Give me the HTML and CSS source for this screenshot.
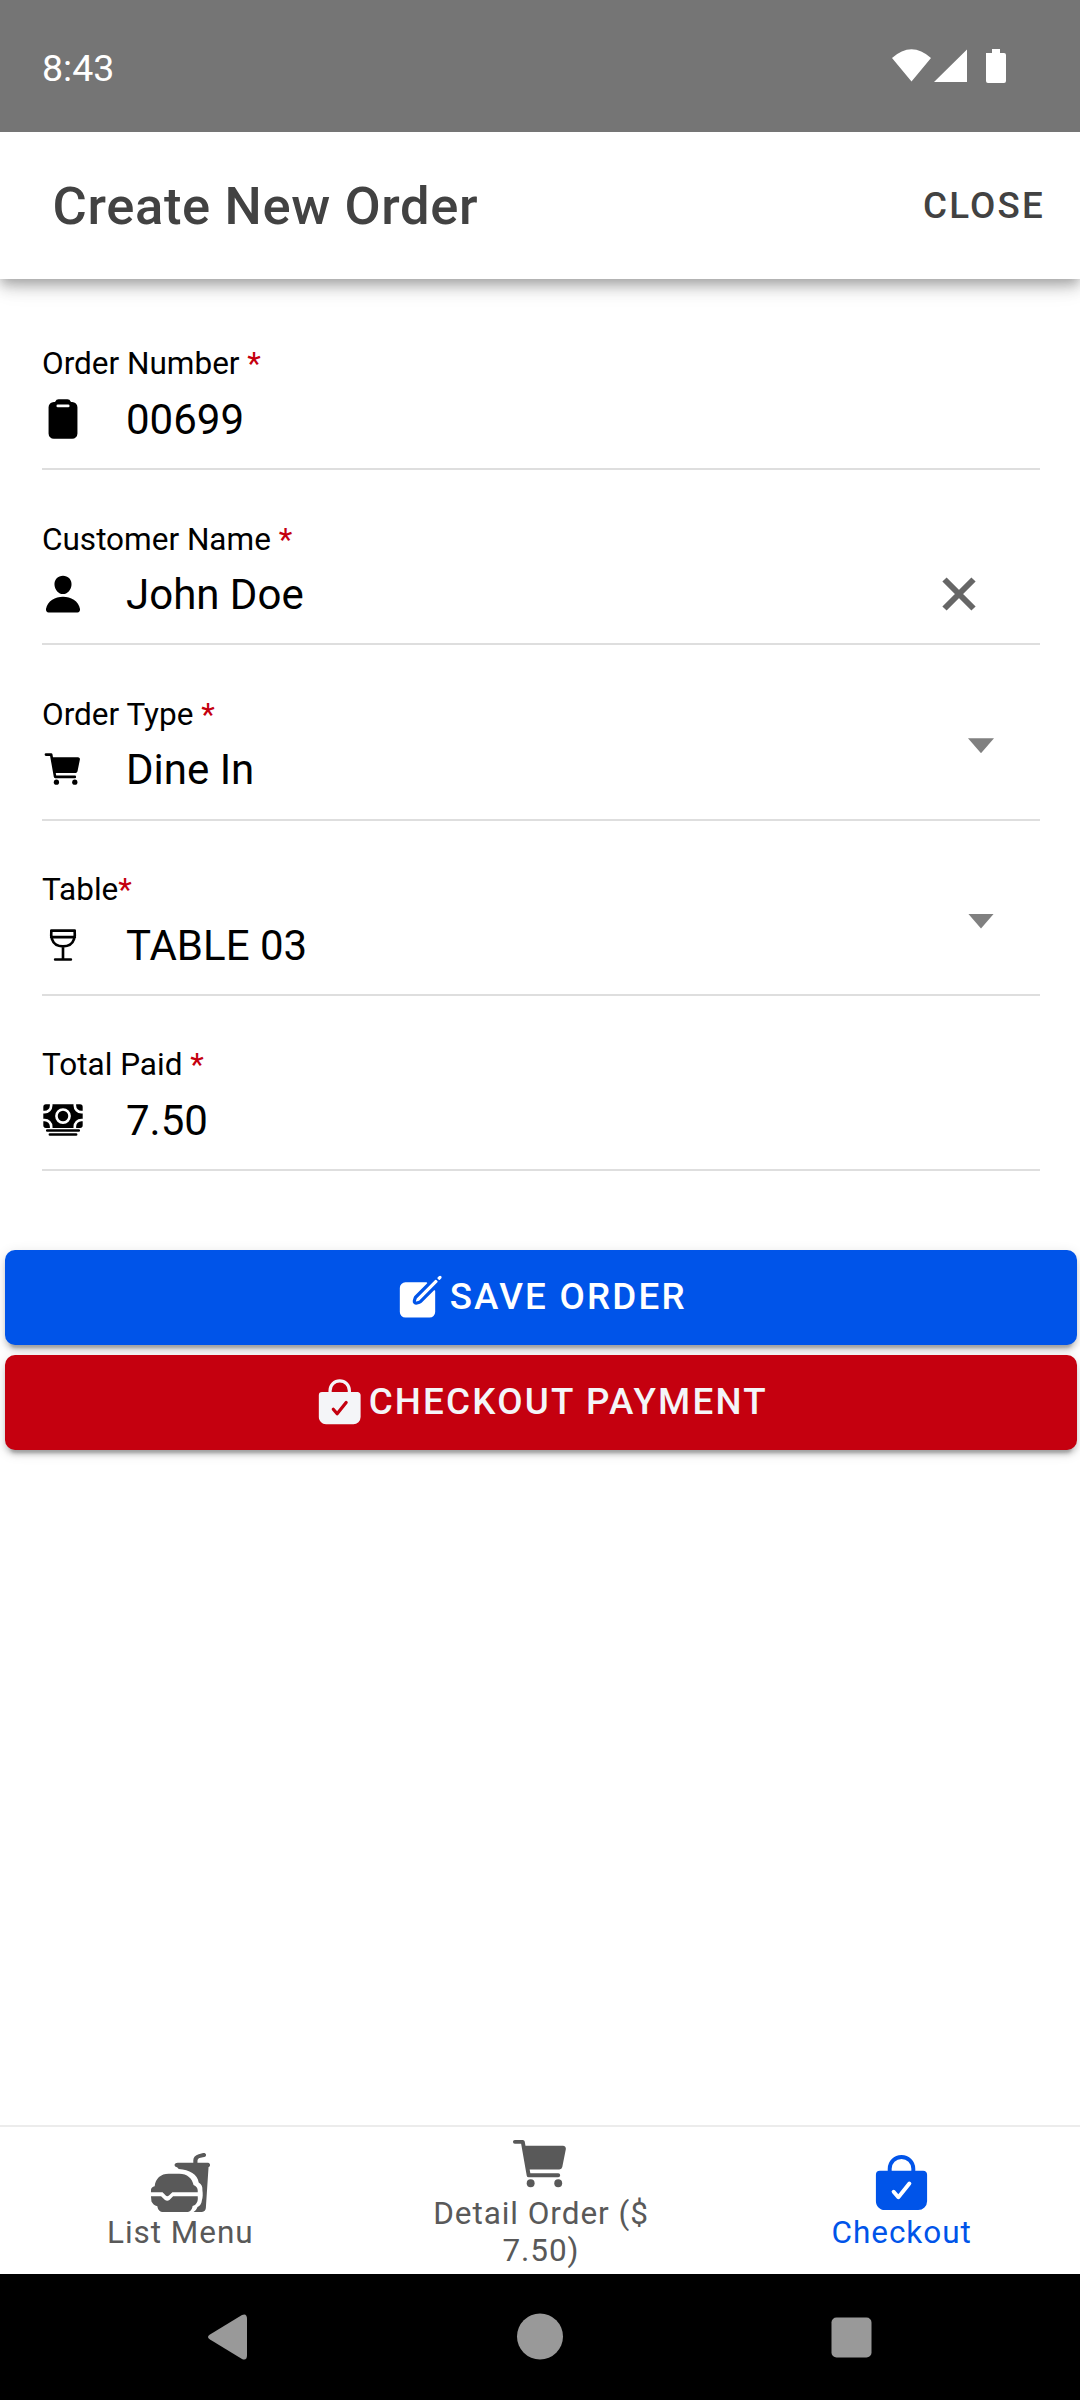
FILE: index.html
```html
<!DOCTYPE html>
<html lang="en">
<head>
<meta charset="utf-8">
<title>Create New Order</title>
<link rel="stylesheet" href="styles.css">
</head>
<body>
<svg class="sprite" width="0" height="0" aria-hidden="true">
  <symbol id="clipboard" viewBox="0 0 512 512"><path d="M368 48h-11.41a8 8 0 01-7.44-5.08A42.18 42.18 0 00309.87 16H202.13a42.18 42.18 0 00-39.28 26.92A8 8 0 01155.41 48H144a64 64 0 00-64 64v320a64 64 0 0064 64h224a64 64 0 0064-64V112a64 64 0 00-64-64zm-48.13 64H192.13a16 16 0 010-32h127.74a16 16 0 010 32z"/></symbol>
  <symbol id="person" viewBox="0 0 512 512"><path d="M332.64 64.58C313.18 43.57 286 32 256 32c-30.16 0-57.43 11.5-76.8 32.38-19.58 21.11-29.12 49.8-26.88 80.78C156.76 206.28 203.27 256 256 256s99.16-49.71 103.67-110.82c2.27-30.7-7.33-59.33-27.03-80.6zM432 480H80a31 31 0 01-24.2-11.13c-6.5-7.77-9.12-18.38-7.18-29.11C57.06 392.94 83.4 353.61 124.8 326c36.78-24.51 83.37-38 131.2-38s94.42 13.5 131.2 38c41.4 27.6 67.74 66.93 76.18 113.75 1.94 10.73-.68 21.34-7.18 29.11A31 31 0 01432 480z"/></symbol>
  <symbol id="cart" viewBox="0 0 512 512"><circle cx="176" cy="416" r="32"/><circle cx="400" cy="416" r="32"/><path d="M456.8 120.78a23.92 23.92 0 00-18.56-8.78H133.89l-6.13-34.78A16 16 0 00112 64H48a16 16 0 000 32h50.58l45.66 258.78A16 16 0 00160 368h240a16 16 0 000-32H173.42l-5.64-32h241.66A24.07 24.07 0 00433 284.71l28.8-144a24 24 0 00-5-19.93z"/></symbol>
  <symbol id="wine" viewBox="0 0 512 512"><path fill="none" stroke="currentColor" stroke-width="32" stroke-linecap="round" stroke-linejoin="round" d="M398.57 80H113.43v16S87.51 272 256 272 398.57 96 398.57 96zM256 272v160M352 432H160M112 160h288"/></symbol>
  <symbol id="cash" viewBox="0 0 512 512"><path d="M448 400H64a16 16 0 010-32h384a16 16 0 010 32zM416 448H96a16 16 0 010-32h320a16 16 0 010 32zM32 272H16v48a32 32 0 0032 32h48v-16a64.07 64.07 0 00-64-64z"/><path d="M480 240h16v-64h-16a96.11 96.11 0 01-96-96V64H128v16a96.11 96.11 0 01-96 96H16v64h16a96.11 96.11 0 0196 96v16h256v-16a96.11 96.11 0 0196-96zm-224 64a96 96 0 1196-96 96.11 96.11 0 01-96 96z"/><circle cx="256" cy="208" r="64"/><path d="M416 336v16h48a32 32 0 0032-32v-48h-16a64.07 64.07 0 00-64 64zM480 144h16V96a32 32 0 00-32-32h-48v16a64.07 64.07 0 0064 64zM96 80V64H48a32 32 0 00-32 32v48h16a64.07 64.07 0 0064-64z"/></symbol>
  <symbol id="create" viewBox="0 0 512 512"><path d="M459.94 53.25a16.06 16.06 0 00-23.22-.56L424.35 65a8 8 0 000 11.31l11.34 11.32a8 8 0 0011.34 0l12.06-12c6.1-6.09 6.67-16.01.85-22.38zM399.34 90L218.82 270.2a9 9 0 00-2.31 3.93L208.16 299a3.91 3.91 0 004.86 4.86l24.85-8.35a9 9 0 003.93-2.31L422 112.66a9 9 0 000-12.66l-9.95-10a9 9 0 00-12.71 0z"/><path d="M386.34 193.66L264.45 315.79A41.08 41.08 0 01247.58 326l-25.9 8.67a35.92 35.92 0 01-44.33-44.33l8.67-25.9a41.08 41.08 0 0110.19-16.87L318.34 125.66A8 8 0 00312.69 112H104a56 56 0 00-56 56v240a56 56 0 0056 56h240a56 56 0 0056-56V199.31a8 8 0 00-13.66-5.65z"/></symbol>
  <symbol id="bag-check" viewBox="0 0 512 512"><path fill-rule="evenodd" d="M454.65 169.4A31.82 31.82 0 00432 160h-64v-16a112 112 0 00-224 0v16H80a32 32 0 00-32 32v216c0 39 33 72 72 72h272a73.22 73.22 0 0050.48-20.55 69.48 69.48 0 0021.52-50.2V192a31.75 31.75 0 00-9.35-22.6zM332.49 274l-89.6 112a16 16 0 01-12.23 6h-.26a16 16 0 01-12.16-5.6l-38.4-44.8a16 16 0 0124.32-20.8L230 350.85l77.5-96.87a16 16 0 0125 20zM336 160H176v-16a80 80 0 01160 0z"/></symbol>
  <symbol id="fast-food" viewBox="0 0 512 512"><path d="M16 336V318C16 302 26 292 46 287C52 222 96 184 160 184H246C310 184 352 222 362 276C384 286 396 300 396 320V336H190L162 362Q148 374 136 362L110 336Z"/><path d="M16 368H98L130 398Q148 410 166 398L196 368H396C400 402 392 420 380 432Q372 442 354 446C352 476 332 496 304 496H118C88 496 72 478 68 448C42 442 30 428 20 410Z"/><path d="M480 96H394V80C394 64 404 56 420 54L448 48C460 46 464 38 464 30C462 18 450 14 440 16L404 26C376 34 360 50 360 76V96H234C216 96 208 104 208 114C208 126 216 130 228 132L242 146C330 152 394 188 404 256C428 270 436 292 434 318C438 346 438 374 430 400C428 428 414 444 394 456C388 474 376 488 362 496H430C450 494 460 484 462 464L484 130C502 126 500 100 480 96Z"/></symbol>
</svg>

<div class="screen">
  <div class="status-bar">
    <span class="clock">8:43</span>
    <svg class="status-icons" viewBox="0 0 116 36" aria-hidden="true"><path d="M0 9Q19.500-8.500 39 9L19.500 32.500ZM42 33 75 .5V33ZM94 4h6V0h8v4h4q2 0 2 2v26q0 2-2 2H96q-2 0-2-2Z"/></svg>
  </div>

  <header class="toolbar">
    <h1 class="title">Create New Order</h1>
    <button class="close">CLOSE</button>
  </header>

  <main class="content">
    <div class="field">
      <div class="label">Order Number <span class="req">*</span></div>
      <div class="row"><svg class="icon"><use href="#clipboard"/></svg><span class="value">00699</span></div>
    </div>
    <div class="field">
      <div class="label">Customer Name <span class="req">*</span></div>
      <div class="row"><svg class="icon"><use href="#person"/></svg><span class="value">John Doe</span>
        <svg class="clear" viewBox="0 0 34 34"><path d="M2.500 2.500 31.500 31.500M31.500 2.500 2.500 31.500"/></svg></div>
    </div>
    <div class="field">
      <div class="label">Order Type <span class="req">*</span></div>
      <div class="row"><svg class="icon"><use href="#cart"/></svg><span class="value">Dine In</span><span class="caret"></span></div>
    </div>
    <div class="field">
      <div class="label">Table<span class="req">*</span></div>
      <div class="row"><svg class="icon"><use href="#wine"/></svg><span class="value">TABLE 03</span><span class="caret"></span></div>
    </div>
    <div class="field">
      <div class="label">Total Paid <span class="req">*</span></div>
      <div class="row"><svg class="icon"><use href="#cash"/></svg><span class="value">7.50</span></div>
    </div>

    <div class="actions">
      <button class="btn save"><svg class="btn-icon"><use href="#create"/></svg><span>SAVE ORDER</span></button>
      <button class="btn pay"><svg class="btn-icon"><use href="#bag-check"/></svg><span>CHECKOUT PAYMENT</span></button>
    </div>
  </main>

  <nav class="tabs">
    <a class="tab"><svg class="tab-icon"><use href="#fast-food"/></svg><span>List Menu</span></a>
    <a class="tab"><svg class="tab-icon"><use href="#cart"/></svg><span>Detail Order ($<br>7.50)</span></a>
    <a class="tab active"><svg class="tab-icon"><use href="#bag-check"/></svg><span>Checkout</span></a>
  </nav>

  <div class="system-nav">
    <svg viewBox="0 0 46 46"><path d="M3 20.500 35 1Q40 -1 40 5V41Q40 47 35 45L3 25.500Q-1 23 3 20.500Z"/></svg>
    <svg viewBox="0 0 46 46"><circle cx="22" cy="22.500" r="23"/></svg>
    <svg viewBox="0 0 46 46"><rect x="3.500" y="3.500" width="40" height="40" rx="5"/></svg>
  </div>
</div>
</body>
</html>
```
FILE: styles.css
```css
* { box-sizing: border-box; }

body {
  margin: 0;
  background: #fff;
  font-family: Roboto, sans-serif;
  color: #000;
}

button {
  border: 0;
  background: none;
  padding: 0;
  font: inherit;
}

svg { fill: currentColor; flex: none; overflow: visible; }

.sprite { position: absolute; }

.screen {
  display: flex;
  flex-direction: column;
  width: 1080px;
  height: 2400px;
  overflow: hidden;
}

.status-bar {
  display: flex;
  justify-content: space-between;
  align-items: flex-start;
  z-index: 1;
  height: 132px;
  padding: 49px 72px 0 42px;
  background: #757575;
  color: #fff;
}

.clock { font-size: 37.500px; line-height: 38px; }

.status-icons { width: 116px; height: 36px; }

.toolbar {
  display: flex;
  justify-content: space-between;
  align-items: center;
  height: 147px;
  padding: 0 35px 0 52.500px;
  background: #fff;
  color: #424242;
  box-shadow: 0 5px 10px -2px rgba(0, 0, 0, .2), 0 10px 13px rgba(0, 0, 0, .14), 0 3px 26px rgba(0, 0, 0, .12);
}

.title {
  margin: 0;
  font-size: 52.500px;
  font-weight: 500;
  letter-spacing: .0125em;
}

.close {
  font-size: 36.750px;
  font-weight: 500;
  letter-spacing: .06em;
  color: inherit;
}

.content { flex: 1; padding-top: 15.800px; }

.field {
  height: 175.250px;
  margin: 0 40px 0 42px;
  padding-top: 48.500px;
  border-bottom: 2px solid #dedede;
}

.label { font-size: 31.500px; line-height: 42px; height: 40.500px; }

.req { color: #c5000f; }

.row {
  display: flex;
  align-items: center;
  height: 70px;
}

.icon { width: 42px; height: 42px; margin-right: 42px; }

.value { flex: 1; padding-top: 2px; font-size: 42px; line-height: 56px; }

.clear {
  width: 34px;
  height: 34px;
  margin-right: 64px;
  stroke: #666;
  stroke-width: 6;
}

.caret {
  align-self: flex-start;
  width: 26px;
  height: 15px;
  margin: 4px 46px 0 0;
  background: #808080;
  clip-path: polygon(0 0, 100% 0, 50% 100%);
}

.actions {
  display: flex;
  flex-direction: column;
  gap: 10px;
  padding: 79px 3px 0 5px;
}

.btn {
  display: flex;
  justify-content: center;
  align-items: center;
  gap: 3px;
  height: 95px;
  padding-bottom: 2px;
  border-radius: 10px;
  font-size: 36.750px;
  font-weight: 500;
  letter-spacing: .06em;
  box-shadow: 0 8px 3px -5px rgba(0, 0, 0, .2), 0 5px 5px rgba(0, 0, 0, .14), 0 3px 13px rgba(0, 0, 0, .12);
}

.btn-icon { width: 51.450px; height: 51.450px; }

.save { background: #0054e9; color: #fff; }
.pay { background: #c5000f; color: #f4f5f8; }

.tabs {
  display: grid;
  grid-template-columns: repeat(3, 1fr);
  height: 149px;
  margin-right: -2px;
  border-top: 2px solid #ececec;
  color: #595959;
}

.tab {
  display: flex;
  flex-direction: column;
  align-items: center;
  justify-content: center;
  font-size: 31.500px;
  line-height: 37px;
  letter-spacing: .03em;
  text-align: center;
}

.tab-icon { width: 63px; height: 63px; }

.active { color: #0054e9; }

.system-nav {
  display: flex;
  justify-content: space-between;
  align-items: flex-start;
  height: 126px;
  padding: 40px 206px 0 207px;
  background: #000;
  color: #999;
}

.system-nav svg { width: 46px; height: 46px; }
```
